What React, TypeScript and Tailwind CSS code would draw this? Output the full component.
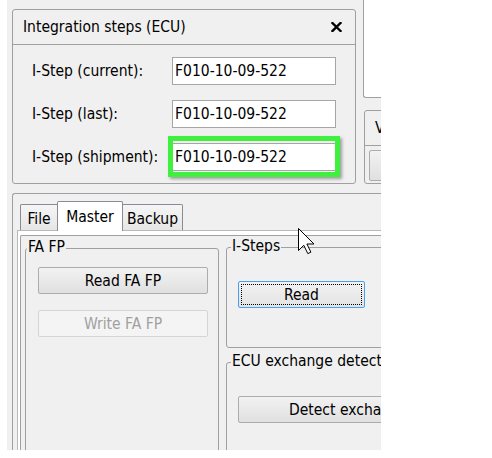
import React from "react";

function Btn({
  children,
  className = "",
}: {
  children: React.ReactNode;
  className?: string;
}) {
  return (
    <div
      className={
        "h-[27px] border border-[#acacac] rounded-[2px] bg-gradient-to-b from-[#f2f2f2] to-[#e0e0e0] flex items-center justify-center shrink-0 " +
        className
      }
    >
      {children}
    </div>
  );
}

function Field({ value }: { value: string }) {
  return (
    <div className="w-[164px] h-[28px] border border-[#a6a6a6] bg-white pl-[2px] flex items-center">
      {value}
    </div>
  );
}

export default function App() {
  return (
    <div className="w-[492px] h-[458px] bg-white overflow-hidden font-['DejaVu_Sans_Condensed','DejaVu_Sans',sans-serif] text-[15.5px] leading-[18px] text-black">
      <div className="ml-[7px] w-[374px] h-[450px] bg-[#f0f0f0] overflow-hidden relative">
        {/* top row */}
        <div className="flex h-[184px]">
          <div className="ml-[5px] mt-[9px] w-[344px] h-[175px] shrink-0 border border-[#a0a0a0] rounded-[3px] flex flex-col">
            <div className="h-[35px] shrink-0 border-b border-[#a0a0a0] flex items-center justify-between pl-[10px] pr-[13px]">
              <span>Integration steps (ECU)</span>
              <svg width="11" height="10" viewBox="0 0 11 10">
                <path d="M1.5 1 L9.5 9 M9.5 1 L1.5 9" stroke="#000" strokeWidth="2.4" strokeLinecap="square" />
              </svg>
            </div>
            <div className="flex flex-col gap-[15px] pt-[12px] pl-[19px]">
              <div className="flex items-center h-[28px]">
                <span className="w-[140px]">I-Step (current):</span>
                <Field value="F010-10-09-522" />
              </div>
              <div className="flex items-center h-[28px]">
                <span className="w-[140px]">I-Step (last):</span>
                <Field value="F010-10-09-522" />
              </div>
              <div className="flex items-center h-[28px]">
                <span className="w-[140px]">I-Step (shipment):</span>
                <div className="relative">
                  <Field value="F010-10-09-522" />
                  <div className="absolute left-[-4px] top-[-7px] right-[-4px] bottom-[-6px] border-[5px] border-[#3ff03f] shadow-[2px_2px_3px_rgba(0,0,0,0.35)]" />
                </div>
              </div>
            </div>
          </div>
          <div className="ml-[7px] flex flex-col">
            <div className="w-[60px] h-[98px] border-l border-b border-[#a0a0a0] rounded-bl-[3px] bg-white" />
            <div className="mt-[12px] ml-[1px] w-[60px] h-[74px] border border-[#a0a0a0] rounded-[3px] flex flex-col">
              <div className="h-[35px] shrink-0 border-b border-[#a0a0a0] flex items-center pl-[10px]">
                V
              </div>
              <div className="ml-[4px] mt-[4px] h-[31px] w-[60px] border border-[#acacac] rounded-[2px] bg-gradient-to-b from-[#f2f2f2] to-[#e0e0e0]" />
            </div>
          </div>
        </div>

        {/* lower section */}
        <div className="mt-[9px] ml-[5px] w-[500px] h-[300px] border-t border-l border-[#a0a0a0] rounded-tl-[3px] flex flex-col">
          <div className="h-[36px] shrink-0 flex items-end pl-[7px]">
            <div className="w-[37px] h-[26px] border-l border-t border-[#898c95] rounded-tl-[2px] bg-gradient-to-b from-[#f5f5f5] to-[#e6e6e6] flex items-center justify-center pt-[2px]">
              File
            </div>
            <div className="relative z-10 -mb-[1px] w-[66px] h-[30px] border-l border-t border-r border-[#898c95] rounded-t-[2px] bg-white flex items-center justify-center">
              Master
            </div>
            <div className="w-[60px] h-[26px] border-t border-r border-[#898c95] rounded-tr-[2px] bg-gradient-to-b from-[#f5f5f5] to-[#e6e6e6] flex items-center justify-center pt-[2px]">
              Backup
            </div>
          </div>
          <div className="ml-[4px] flex-1 border-l border-t border-[#b9b9b9] bg-white flex flex-col">
            <div className="ml-[2px] mt-[4px] flex-1 border-l border-t border-[#a0a0a0] rounded-tl-[2px] bg-[#f0f0f0] flex items-start">
              {/* FA FP */}
              <div className="relative ml-[4px] mt-[12px] w-[194px] h-[260px] border border-[#a0a0a0] rounded-[3px] flex flex-col shrink-0">
                <span className="absolute left-[1px] top-[-11px] px-[1px] bg-[#f0f0f0]">FA FP</span>
                <Btn className="ml-[12px] mt-[18px] w-[170px]">Read FA FP</Btn>
                <div className="ml-[12px] mt-[16px] w-[170px] h-[27px] border border-[#d5d5d5] rounded-[2px] bg-[#f4f4f4] text-[#a0a0a0] flex items-center justify-center">
                  Write FA FP
                </div>
              </div>
              {/* right column */}
              <div className="ml-[7px] flex flex-col shrink-0">
                <div className="relative mt-[11px] w-[200px] h-[101px] border border-[#a0a0a0] rounded-[3px] flex flex-col">
                  <span className="absolute left-[4px] top-[-11px] px-[1px] bg-[#f0f0f0]">I-Steps</span>
                  <div className="relative ml-[11px] mt-[33px] w-[127px] h-[27px] border border-[#4a9ff0] rounded-[2px] bg-gradient-to-b from-[#f2f2f2] to-[#e3e3e3] flex items-center justify-center">
                    Read
                    <div className="absolute inset-[2px] border border-dotted border-black" />
                  </div>
                </div>
                <div className="relative mt-[14px] w-[200px] h-[150px] border border-[#a0a0a0] rounded-[3px] flex flex-col">
                  <span className="absolute left-[4px] top-[-11px] px-[1px] bg-[#f0f0f0] whitespace-nowrap">ECU exchange detection</span>
                  <Btn className="ml-[11px] mt-[33px] w-[180px] justify-start pl-[50px] whitespace-nowrap">Detect exchange</Btn>
                </div>
              </div>
            </div>
          </div>
        </div>

        {/* mouse cursor */}
        <svg className="absolute left-[291px] top-[228px]" width="18" height="27" viewBox="0 0 18 27">
          <path
            d="M0.5 0.5 L0.5 22.5 L5.8 17.3 L9.8 25.6 L12.9 24.2 L8.9 16 L16 16 Z"
            fill="#fff"
            stroke="#000"
            strokeWidth="1"
            strokeLinejoin="miter"
          />
        </svg>
      </div>
    </div>
  );
}
